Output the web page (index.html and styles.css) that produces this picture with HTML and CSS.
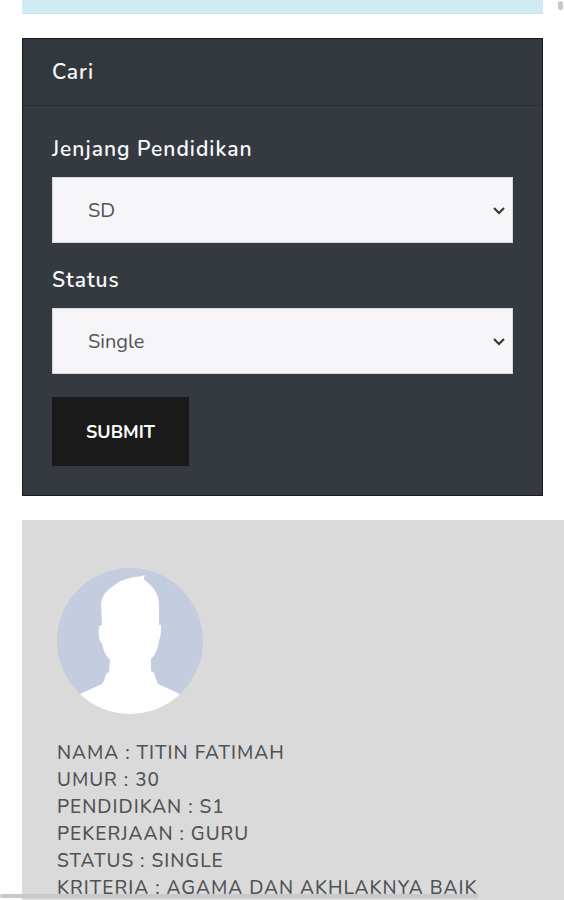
FILE: index.html
```html
<!DOCTYPE html>
<html lang="id">
<head>
    <meta charset="UTF-8">
    <meta name="viewport" content="width=device-width, initial-scale=1.0">
    <title>Cari</title>
    <link rel="stylesheet" href="styles.css">
</head>
<body>
    <main class="main-content">
        <div class="alert-info"></div>

        <form class="search-card">
            <div class="search-header">Cari</div>
            <div class="search-body">
                <div class="form-group">
                    <label for="jenjang">Jenjang Pendidikan</label>
                    <div class="select-box">
                        <select id="jenjang" name="jenjang">
                            <option>SD</option>
                            <option>SMP</option>
                            <option>SMA</option>
                            <option>S1</option>
                        </select>
                        <svg class="chevron" viewBox="0 0 12 8" aria-hidden="true"><path d="M1 1l5 5 5-5"/></svg>
                    </div>
                </div>
                <div class="form-group">
                    <label for="status">Status</label>
                    <div class="select-box">
                        <select id="status" name="status">
                            <option>Single</option>
                            <option>Menikah</option>
                        </select>
                        <svg class="chevron" viewBox="0 0 12 8" aria-hidden="true"><path d="M1 1l5 5 5-5"/></svg>
                    </div>
                </div>
                <button type="submit">SUBMIT</button>
            </div>
        </form>

        <section class="profile-card">
            <svg class="avatar" viewBox="0 0 146 146" role="img" aria-label="Foto profil">
                <defs>
                    <clipPath id="circle"><circle cx="73" cy="73" r="73"/></clipPath>
                </defs>
                <g clip-path="url(#circle)">
                    <rect width="146" height="146" fill="#c4cce0"/>
                    <path fill="#fff" d="M0 135L23 126L45 116Q48 112 49 106L52 104L53 92Q47 86 45 76L43 73Q41 68 42 60Q42 57 45 57L44 36Q45 25 55 19Q64 11 77 9Q83 9 88 7Q85 11 90 14Q101 22 102 35L102 57Q105 56 104 61Q104 68 102 73Q100 85 94 91L94 103L97 105Q99 112 101 116L123 126L146 135V146H0Z"/>
                </g>
            </svg>
            <div class="profile-info">
                <div>NAMA : TITIN FATIMAH</div>
                <div>UMUR : 30</div>
                <div>PENDIDIKAN : S1</div>
                <div>PEKERJAAN : GURU</div>
                <div>STATUS : SINGLE</div>
                <div>KRITERIA : AGAMA DAN AKHLAKNYA BAIK</div>
            </div>
        </section>
    </main>

    <!-- Overlay scroll indicators -->
    <div class="scroll-y"></div>
    <div class="scroll-x"></div>
</body>
</html>
```
FILE: styles.css
```css
* {
    box-sizing: border-box;
}

body {
    font-family: Nunito, Lato, "Liberation Sans", sans-serif;
    font-size: 21px;
    font-weight: 600;
    line-height: 27px;
    letter-spacing: 1px;
    background-color: #ffffff;
    color: #505356;
    margin: 0;
    overflow-x: hidden;
}

.main-content {
    display: flex;
    flex-direction: column;
    gap: 24px;
    padding-left: 22px;
}

.alert-info {
    height: 14px;
    margin-right: 21px;
    background-color: #d1ebf4;
    border-bottom: 1px solid #c4e5ee;
}

/* Search form */
.search-card {
    margin-right: 21px;
    background-color: #353a40;
    border: 1px solid #171c23;
    color: #f8f9fa;
}

.search-header {
    padding: 20px 29px 19px;
    background-color: #33383e;
    border-bottom: 1px solid #2a2f34;
}

.search-body {
    padding: 29px;
}

.form-group {
    margin-bottom: 23px;
}

.form-group label {
    display: block;
    margin-bottom: 13px;
    line-height: 29px;
}

.select-box {
    position: relative;
}

select {
    display: block;
    width: 100%;
    height: 66px;
    padding: 0 35px;
    appearance: none;
    background-color: #f6f6f8;
    border: 1px solid #d5d7da;
    border-radius: 0;
    color: #505356;
    font-family: inherit;
    font-size: 20px;
}

.chevron {
    position: absolute;
    top: 30px;
    right: 8px;
    width: 12px;
    height: 8px;
    fill: none;
    stroke: #333333;
    stroke-width: 2;
    pointer-events: none;
}

button {
    display: block;
    height: 69px;
    padding: 0 34px;
    background-color: #1a1a1a;
    border: none;
    color: #ffffff;
    font-family: inherit;
    font-size: 18px;
    font-weight: 700;
}

/* Profile */
.profile-card {
    padding: 48px 35px 0;
    background-color: #dadada;
}

.avatar {
    display: block;
    width: 146px;
    height: 146px;
    margin-bottom: 26px;
}

.profile-info {
    font-size: 19px;
    font-weight: 500;
    white-space: nowrap;
}

/* Scroll indicators */
.scroll-x,
.scroll-y {
    position: fixed;
    background-color: #c8c8c8;
    border-radius: 3px;
}

.scroll-x {
    left: 0;
    bottom: 2px;
    width: 85%;
    height: 4px;
}

.scroll-y {
    top: 1px;
    right: 1px;
    width: 5px;
    height: 9px;
}
```
